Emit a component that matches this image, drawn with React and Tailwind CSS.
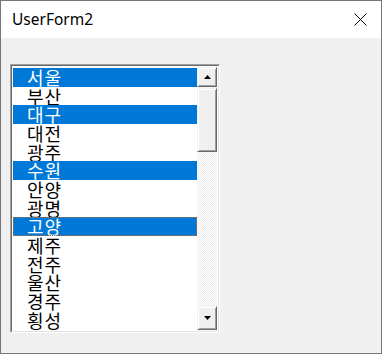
import React from "react";

const cities = ["서울", "부산", "대구", "대전", "광주", "수원", "안양", "광명", "고양", "제주", "전주", "울산", "경주", "횡성"];
const selected = [0, 2, 5, 8];
const focused = 8;

const bevel = "bg-[#f0f0f0] border-t border-l border-t-[#f0f0f0] border-l-[#f0f0f0] border-b border-r border-b-[#696969] border-r-[#696969] shadow-[inset_1px_1px_#ffffff,inset_-1px_-1px_#a0a0a0]";

const Arrow = ({ up }) => (
    <svg width="7" height="4" viewBox="0 0 7 4">
        {up ? <polygon points="3.5,0 7,4 0,4" fill="#000" /> : <polygon points="0,0 7,0 3.5,4" fill="#000" />}
    </svg>
);

const App = () => {
    return (
        <div className="w-[382px] h-[354px] border border-[#777777] bg-[#f0f0f0] flex flex-col overflow-hidden">
            {/* title bar */}
            <div className="h-[37px] bg-white flex items-center justify-between pl-[11px] pr-[14px] shrink-0">
                <span className="text-[15.5px] text-black font-['Noto_Sans',sans-serif] leading-none">UserForm2</span>
                <svg width="13" height="13" viewBox="0 0 13 13">
                    <path d="M0.5 0.5 L12.5 12.5 M12.5 0.5 L0.5 12.5" stroke="#000" strokeWidth="1" />
                </svg>
            </div>

            {/* list box */}
            <div className="ml-[9px] mt-[26px] w-[210px] h-[269px] border-t border-l border-t-[#a0a0a0] border-l-[#a0a0a0] border-b border-r border-b-white border-r-white">
                <div className="w-full h-full border-t border-l border-t-[#696969] border-l-[#696969] border-b border-r border-b-[#e3e3e3] border-r-[#e3e3e3] bg-white flex p-px">
                    <div className="flex-1 flex flex-col pt-px overflow-hidden">
                        {cities.map((c, i) => {
                            const sel = selected.includes(i);
                            return (
                                <div
                                    key={i}
                                    className={`h-[18.67px] shrink-0 leading-[18.67px] pl-[14px] text-[18px] tracking-[1px] font-['Noto_Sans_CJK_KR',sans-serif] ${sel ? "bg-[#0078d7] text-white" : "text-black"} ${i === focused ? "outline outline-1 outline-dotted outline-[#c06a1a] -outline-offset-1" : ""}`}
                                >
                                    {c}
                                </div>
                            );
                        })}
                    </div>

                    {/* scrollbar */}
                    <div className="w-[20px] flex flex-col bg-[repeating-conic-gradient(#ffffff_0_25%,#ebebeb_0_50%)] bg-[length:2px_2px]">
                        <div className={`h-[20px] flex items-center justify-center ${bevel}`}>
                            <Arrow up />
                        </div>
                        <div className={`h-[64px] mt-px ${bevel}`} />
                        <div className="flex-1" />
                        <div className={`h-[24px] flex items-center justify-center ${bevel}`}>
                            <Arrow />
                        </div>
                    </div>
                </div>
            </div>
        </div>
    );
};

export default App;
